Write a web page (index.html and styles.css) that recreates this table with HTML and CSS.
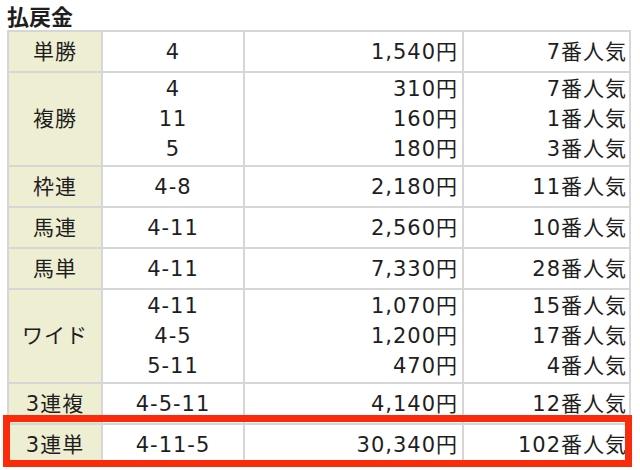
FILE: index.html
```html
<!DOCTYPE html>
<html lang="ja">
<head>
<meta charset="utf-8">
<title>払戻金</title>
<link rel="stylesheet" href="styles.css">
</head>
<body>
<div class="page">
  <h2 class="title">払戻金</h2>
  <table class="payout">
    <tbody>
      <tr><th>単勝</th><td class="num">4</td><td class="yen">1,540円</td><td class="pop">7番人気</td></tr>
      <tr><th>複勝</th><td class="num">4<br>11<br>5</td><td class="yen">310円<br>160円<br>180円</td><td class="pop">7番人気<br>1番人気<br>3番人気</td></tr>
      <tr><th>枠連</th><td class="num">4-8</td><td class="yen">2,180円</td><td class="pop">11番人気</td></tr>
      <tr><th>馬連</th><td class="num">4-11</td><td class="yen">2,560円</td><td class="pop">10番人気</td></tr>
      <tr><th>馬単</th><td class="num">4-11</td><td class="yen">7,330円</td><td class="pop">28番人気</td></tr>
      <tr><th>ワイド</th><td class="num">4-11<br>4-5<br>5-11</td><td class="yen">1,070円<br>1,200円<br>470円</td><td class="pop">15番人気<br>17番人気<br>4番人気</td></tr>
      <tr><th>3連複</th><td class="num">4-5-11</td><td class="yen">4,140円</td><td class="pop">12番人気</td></tr>
      <tr><th>3連単</th><td class="num">4-11-5</td><td class="yen">30,340円</td><td class="pop">102番人気</td></tr>
    </tbody>
  </table>
  <div class="highlight"></div>
</div>
</body>
</html>
```
FILE: styles.css
```css
html, body {
  margin: 0;
  padding: 0;
  background: #ffffff;
}
.page {
  position: relative;
  width: 640px;
  height: 470px;
  color: #1e1e1e;
  font-family: "DejaVu Sans", "Noto Sans CJK JP", sans-serif;
}
.title {
  margin: 0;
  padding: 2px 0 0 7px;
  height: 28px;
  font-family: "Noto Sans CJK JP", sans-serif;
  font-weight: 700;
  font-size: 22px;
  line-height: 26px;
  letter-spacing: 0;
}
.payout {
  margin-left: 7px;
  border-collapse: separate;
  border-spacing: 0;
  table-layout: fixed;
  width: 624px;
  border-top: 2px solid #d6d6d6;
  border-left: 2px solid #d6d6d6;
  font-size: 21px;
  letter-spacing: 1px;
}
.payout th,
.payout td {
  box-sizing: border-box;
  border-right: 2px solid #d6d6d6;
  border-bottom: 2px solid #d6d6d6;
  padding: 1px 4px;
  height: 41px;
  line-height: 30px;
  vertical-align: middle;
  font-weight: 400;
  white-space: nowrap;
}
.payout th {
  width: 94px;
  background: #eeeed3;
  text-align: center;
}
.payout td.num {
  width: 142px;
  text-align: center;
}
.payout td.yen {
  width: 219px;
  text-align: right;
  padding-right: 4px;
}
.payout td.pop {
  width: 167px;
  text-align: right;
  padding-right: 2px;
}
.highlight {
  position: absolute;
  left: 3px;
  top: 415px;
  width: 629px;
  height: 52px;
  box-sizing: border-box;
  border: 7px solid #fb2a0a;
}
```
